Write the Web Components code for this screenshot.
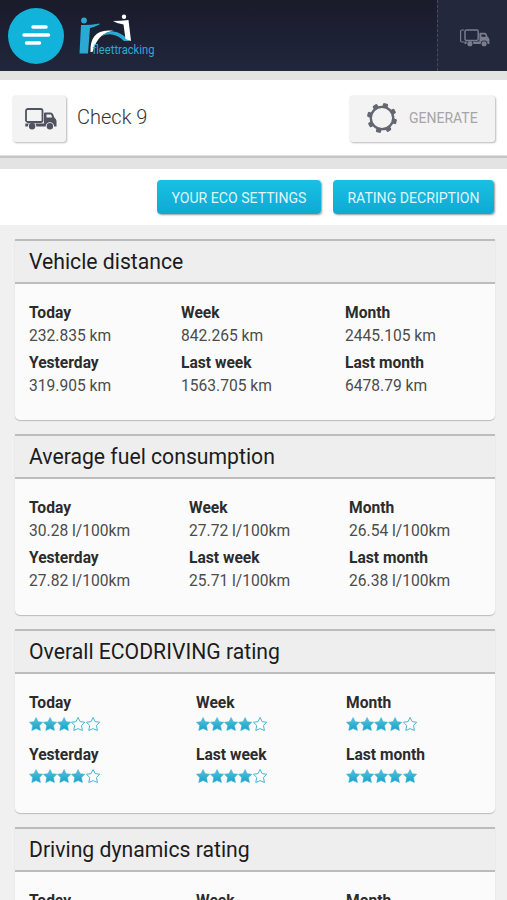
<!DOCTYPE html>
<html lang="en">
<head>
<meta charset="utf-8">
<title>Fleettracking</title>
<style>
  html, body { margin: 0; }
  body {
    height: 900px;
    overflow: hidden;
    background: #f0f0f0;
    font-family: Roboto, "Liberation Sans", sans-serif;
    color: #333;
  }
</style>
</head>
<body>
<eco-app></eco-app>

<script>
const define = (name, html, init) => {
  const template = document.createElement("template");
  template.innerHTML = html;
  customElements.define(name, class extends HTMLElement {
    constructor() {
      super();
      this.attachShadow({ mode: "open" }).appendChild(
        template.content.cloneNode(true)
      );
    }
    connectedCallback() {
      if (init) init(this, this.shadowRoot);
    }
  });
};

// truck glyph, coloured by currentColor; "stacked" adds a second box behind
define("truck-icon", `
  <style>
    :host { display: block; line-height: 0; }
    svg { display: block; overflow: visible; }
    .back { display: none; }
    :host([stacked]) .back { display: block; }
  </style>
  <svg width="32" height="22" viewBox="0 0 32 22">
    <path class="back" d="M0 1H-3Q-4.500 1-4.500 2.500V14.500Q-4.500 16-3 16H0" fill="none" stroke="currentColor" stroke-width="1.500"/>
    <rect x="1" y="1" width="16.500" height="13" rx="1.800" fill="none" stroke="currentColor" stroke-width="1.800"/>
    <path fill="currentColor" fill-rule="evenodd" d="M.3 15.500H19V5.500Q19 4.500 20 4.500H25.500Q27.300 4.500 28 6L29.300 9.500Q31.500 11 31.500 13V18.500H29.200A4.300 4.300 0 0 0 20.600 18.500H11.400A4.300 4.300 0 0 0 2.800 18.500H.3ZM21.500 6.500V9.500H27.200L26 6.500Z"/>
    <circle cx="7.100" cy="18.200" r="3.200" fill="currentColor"/>
    <circle cx="24.900" cy="18.200" r="3.200" fill="currentColor"/>
  </svg>
`);

define("gear-icon", `
  <style>:host, svg { display: block; }</style>
  <svg width="30" height="30" viewBox="-15 -15 30 30">
    <circle r="11.200" fill="none" stroke="#646772" stroke-width="2.300"/>
    <g id="teeth" fill="#646772"></g>
  </svg>
`, (el, root) => {
  root.getElementById("teeth").innerHTML = [...Array(8).keys()].map((i) =>
    `<path transform="rotate(${i * 45 + 15})" d="M-4-10.500L-2.600-12V-13.700Q-2.600-15-1.300-15H1.300Q2.600-15 2.600-13.700V-12L4-10.500Z"/>`
  ).join("");
});

define("brand-logo", `
  <style>
    :host, svg { display: block; }
    svg { overflow: visible; }
  </style>
  <svg width="80" height="46" viewBox="0 0 80 46">
    <circle cx="5" cy="6.500" r="2.900" fill="#2ba9d3"/>
    <path fill="#2ba9d3" d="M2 11Q9 11.500 20.500 9.500V10.500Q15.500 13 11 14L9 39.500H.5Z"/>
    <path fill="#fff" d="M11.500 38C11 23 18 14.500 35 17C25 18 18 23 13.500 38Z"/>
    <path fill="#2ba9d3" d="M22 22.500Q35 10.500 51 27H45Q34 16.500 22 22.500Z"/>
    <circle cx="45" cy="2.700" r="2.200" fill="#fff"/>
    <path fill="#fff" d="M34 7Q42 7 49.500 6L52 27L46.500 25L44.500 10.500Q38 9.800 34 7Z"/>
    <text x="13.500" y="39.500" fill="#2ba9d3" font-size="13" textLength="62" lengthAdjust="spacingAndGlyphs">fleettracking</text>
  </svg>
`);

define("top-bar", `
  <style>
    :host {
      display: flex;
      height: 71px;
      background: linear-gradient(#1a1b2b, #20263c);
    }
    .menu {
      display: grid;
      place-content: center;
      width: 56px; height: 56px;
      margin: 8px 0 0 8px;
      border-radius: 50%;
      background: #12b3da;
    }
    .menu svg { margin-top: -2px; }
    brand-logo { margin: 14px 0 0 15px; }
    .fleet {
      display: grid;
      place-items: center;
      width: 69px;
      margin-left: auto;
      border-left: 1px dashed #464b60;
      background: #24283d;
      color: #7b7d8c;
    }
    truck-icon { transform: translate(4px, 2px) scale(.8); }
  </style>
  <div class="menu">
    <svg width="30" height="22" viewBox="0 0 30 22" stroke="#fff" stroke-width="3.500" stroke-linecap="round">
      <path d="M12 3H25M3 11H27.500M5.500 19H18.500"/>
    </svg>
  </div>
  <brand-logo></brand-logo>
  <div class="fleet"><truck-icon stacked></truck-icon></div>
`);

define("vehicle-bar", `
  <style>
    :host {
      display: flex;
      align-items: flex-start;
      box-sizing: border-box;
      height: 98px;
      padding: 16px 12px 0 13px;
      border-top: 9px solid #e3e3e1;
      border-bottom: 11px solid #e3e3e3;
      background: linear-gradient(#fff 75px, #c4c4c4 76px);
    }
    .tile {
      display: flex;
      align-items: center;
      box-sizing: border-box;
      height: 46px;
      border-radius: 3px;
      background: #f3f3f4;
      box-shadow: 1px 1px 2px #bbb, 0 0 2px #ddd;
      color: #50535f;
    }
    .truck { width: 53px; padding-left: 12px; }
    .name { margin-left: 11px; font-size: 20px; font-weight: 300; line-height: 43px; color: #333; }
    .generate { width: 145px; margin-left: auto; padding-left: 17px; gap: 12px; }
    .generate gear-icon { margin-top: -3px; }
    .generate span { margin-top: -2px; font-size: 14px; color: #a5a5a5; }
  </style>
  <div class="tile truck"><truck-icon></truck-icon></div>
  <div class="name"><slot></slot></div>
  <div class="tile generate"><gear-icon></gear-icon><span>GENERATE</span></div>
`);

define("eco-button", `
  <style>
    :host {
      display: block;
      box-sizing: border-box;
      height: 34px;
      border-radius: 4px;
      background: linear-gradient(#19c0e4, #0fa9d3);
      box-shadow: 1px 1px 2px #999;
      color: #dff6fc;
      font-size: 14.100px;
      line-height: 36px;
      text-align: center;
      white-space: nowrap;
    }
  </style>
  <slot></slot>
`);

define("star-rating", `
  <style>
    :host { display: flex; height: 15px; }
    svg { display: block; }
  </style>
`, (el, root) => {
  const value = Number(el.getAttribute("value"));
  const star = "M7.100.500L9.200 4.700L13.700 5.200L10.500 8.500L11.400 13.500L7.100 11.600L2.800 13.500L3.700 8.500L.500 5.200L5 4.700Z";
  for (let i = 0; i < 5; i++) {
    root.innerHTML += `
      <svg width="14.150" height="15" viewBox="0 0 14.150 15">
        <defs><linearGradient id="g${i}" x2="0" y2="1">
          <stop stop-color="#55c3df"/><stop offset="1" stop-color="#16a1c8"/>
        </linearGradient></defs>
        <path d="${star}" fill="${i < value ? `url(#g${i})` : "#fff"}" stroke="#45b4d0" stroke-width="${i < value ? 0.6 : 1}" stroke-linejoin="round"/>
      </svg>`;
  }
});

define("stat-item", `
  <style>
    :host { display: block; font-size: 15.600px; white-space: nowrap; }
    .label { font-size: 15.600px; font-weight: 700; line-height: 24px; color: #2c2c2c; }
    .value { height: 24px; line-height: 23px; color: #4c4c4c; }
  </style>
  <div class="label"></div>
  <div class="value"><slot></slot></div>
`, (el, root) => {
  root.querySelector(".label").textContent = el.getAttribute("label");
});

define("stat-card", `
  <style>
    :host {
      display: block;
      box-sizing: border-box;
      height: 181px;
      border-radius: 0 0 5px 5px;
      background: #fbfbfb;
      box-shadow: 0 1px 1px #bbb;
    }
    :host([rating]) { height: 184px; }
    h2 {
      box-sizing: border-box;
      height: 45px;
      margin: 0;
      padding-left: 14px;
      border: solid #bcbcbc;
      border-width: 2px 0;
      background: #eee;
      color: #1c1c1c;
      font-size: 21.200px;
      font-weight: 400;
      line-height: 41px;
    }
    .grid {
      display: grid;
      grid-template-columns: var(--cols);
      row-gap: 2px;
      padding: 17px 0 0 14px;
    }
    :host([rating]) .grid { row-gap: 4px; }
  </style>
  <h2></h2>
  <div class="grid"><slot></slot></div>
`, (el, root) => {
  root.querySelector("h2").textContent = el.getAttribute("heading");
});

define("eco-app", `
  <style>
    :host { display: block; height: 900px; overflow: hidden; }
    .actions {
      display: flex;
      justify-content: flex-end;
      gap: 12px;
      box-sizing: border-box;
      height: 56px;
      padding: 11px 13px 0 0;
      background: #fff;
    }
    .cards {
      display: flex;
      flex-direction: column;
      gap: 14px;
      padding: 14px 12px 0 15px;
    }
    star-rating { padding: 2px 0 5px; }
  </style>
  <top-bar></top-bar>
  <vehicle-bar>Check 9</vehicle-bar>
  <div class="actions">
    <eco-button style="width: 164px">YOUR ECO SETTINGS</eco-button>
    <eco-button style="width: 161px">RATING DECRIPTION</eco-button>
  </div>
  <div class="cards">
    <stat-card heading="Vehicle distance" style="--cols: 152px 164px 1fr">
      <stat-item label="Today">232.835 km</stat-item>
      <stat-item label="Week">842.265 km</stat-item>
      <stat-item label="Month">2445.105 km</stat-item>
      <stat-item label="Yesterday">319.905 km</stat-item>
      <stat-item label="Last week">1563.705 km</stat-item>
      <stat-item label="Last month">6478.79 km</stat-item>
    </stat-card>
    <stat-card heading="Average fuel consumption" style="--cols: 160px 160px 1fr">
      <stat-item label="Today">30.28 l/100km</stat-item>
      <stat-item label="Week">27.72 l/100km</stat-item>
      <stat-item label="Month">26.54 l/100km</stat-item>
      <stat-item label="Yesterday">27.82 l/100km</stat-item>
      <stat-item label="Last week">25.71 l/100km</stat-item>
      <stat-item label="Last month">26.38 l/100km</stat-item>
    </stat-card>
    <stat-card rating heading="Overall ECODRIVING rating" style="--cols: 167px 150px 1fr">
      <stat-item label="Today"><star-rating value="3"></star-rating></stat-item>
      <stat-item label="Week"><star-rating value="4"></star-rating></stat-item>
      <stat-item label="Month"><star-rating value="4"></star-rating></stat-item>
      <stat-item label="Yesterday"><star-rating value="4"></star-rating></stat-item>
      <stat-item label="Last week"><star-rating value="4"></star-rating></stat-item>
      <stat-item label="Last month"><star-rating value="5"></star-rating></stat-item>
    </stat-card>
    <stat-card rating heading="Driving dynamics rating" style="--cols: 167px 150px 1fr">
      <stat-item label="Today"></stat-item>
      <stat-item label="Week"></stat-item>
      <stat-item label="Month"></stat-item>
    </stat-card>
  </div>
`);
</script>
</body>
</html>
